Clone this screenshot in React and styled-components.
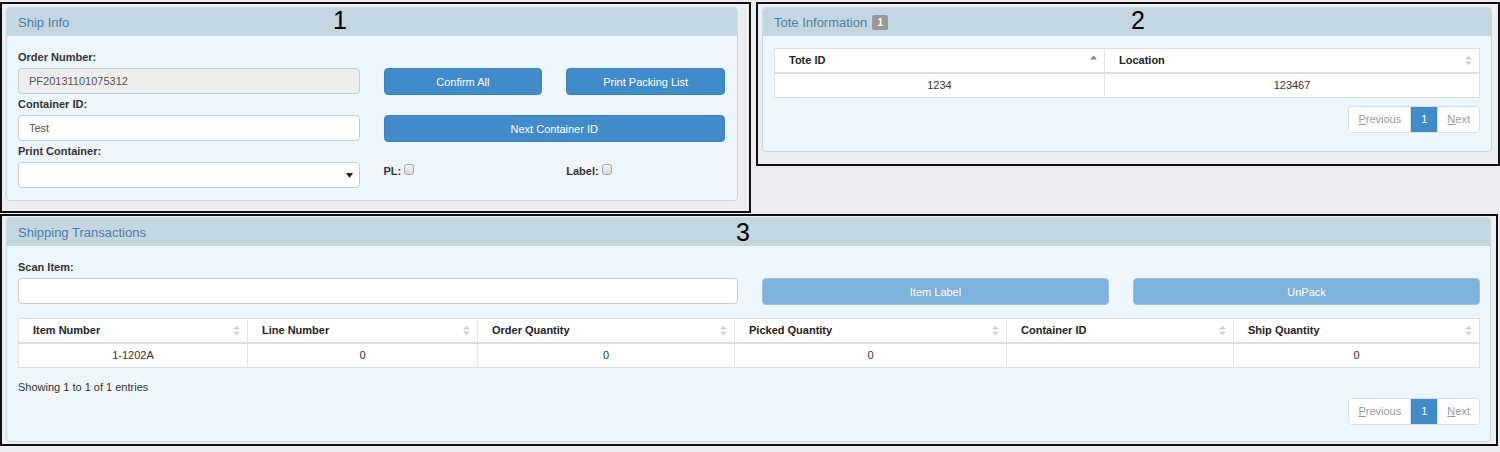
import styled, { createGlobalStyle } from "styled-components";

const GlobalStyle = createGlobalStyle`
  body {
    margin: 0;
    background: #eeedf2;
    font-family: "Liberation Sans", Arial, sans-serif;
    font-size: 11px;
    color: #333;
  }
`;

function SortIcon({ dir }) {
  return (
    <SortSvg width="7" height="11" viewBox="0 0 7 11">
      {dir !== "desc" && (
        <path d="M0 4.5 L3.5 0.5 L7 4.5 Z" fill={dir === "asc" ? "#7b7fd6" : "#d2d2d2"} />
      )}
      {!dir && <path d="M0 6.5 L3.5 10.5 L7 6.5 Z" fill="#d2d2d2" />}
    </SortSvg>
  );
}

function Pagination() {
  return (
    <Pager>
      <PageLink disabled>
        <u>P</u>revious
      </PageLink>
      <PageLink active>1</PageLink>
      <PageLink disabled>
        <u>N</u>ext
      </PageLink>
    </Pager>
  );
}

function DataTable({ columns, rows }) {
  return (
    <Table>
      <thead>
        <tr>
          {columns.map((c) => (
            <Th key={c.title} style={c.width ? { width: c.width } : undefined}>
              <ThInner>
                {c.title}
                <SortIcon dir={c.sort} />
              </ThInner>
            </Th>
          ))}
        </tr>
      </thead>
      <tbody>
        {rows.map((r, i) => (
          <tr key={i}>
            {r.map((v, j) => (
              <Td key={j}>{v}</Td>
            ))}
          </tr>
        ))}
      </tbody>
    </Table>
  );
}

const shipColumns = [
  { title: "Item Number", width: 229 },
  { title: "Line Number", width: 230 },
  { title: "Order Quantity", width: 257 },
  { title: "Picked Quantity", width: 272 },
  { title: "Container ID", width: 227 },
  { title: "Ship Quantity" },
];

export default function App() {
  return (
    <>
      <GlobalStyle />
      <Page>
        <TopRow>
          <Marker width="751px" pad="3px 11px 10px 4px">
            <Num left="331px">1</Num>
            <Panel>
              <PanelHeading>Ship Info</PanelHeading>
              <PanelBody pad="13px 12px 12px 11px">
                <TwoCol>
                  <Column>
                    <Label>Order Number:</Label>
                    <Input disabled value="PF20131101075312" readOnly />
                    <Label>Container ID:</Label>
                    <Input value="Test" readOnly />
                    <Label>Print Container:</Label>
                    <Select>
                      <svg width="7" height="5" viewBox="0 0 7 5">
                        <path d="M0 0 L7 0 L3.5 5 Z" fill="#222" />
                      </svg>
                    </Select>
                  </Column>
                  <Actions>
                    <Button>Confirm All</Button>
                    <Button>Print Packing List</Button>
                    <Button wide>Next Container ID</Button>
                    <CheckLabel>
                      PL: <Check type="checkbox" />
                    </CheckLabel>
                    <CheckLabel>
                      Label: <Check type="checkbox" />
                    </CheckLabel>
                  </Actions>
                </TwoCol>
              </PanelBody>
            </Panel>
          </Marker>
          <Marker width="744px" pad="3px 6px 12px 4px">
            <Num left="373px">2</Num>
            <Panel>
              <PanelHeading>
                Tote Information <Badge>1</Badge>
              </PanelHeading>
              <PanelBody pad="12px 11px 18px 11px">
                <DataTable
                  columns={[
                    { title: "Tote ID", width: 330, sort: "asc" },
                    { title: "Location" },
                  ]}
                  rows={[["1234", "123467"]]}
                />
                <PagerRow top="8px">
                  <Pagination />
                </PagerRow>
              </PanelBody>
            </Panel>
          </Marker>
        </TopRow>
        <Marker width="1498px" pad="1px 5px 2px 4px">
          <Num left="734px">3</Num>
          <Panel>
            <PanelHeading>Shipping Transactions</PanelHeading>
            <PanelBody pad="13px 10px 16px 11px">
              <ScanGrid>
                <Label>Scan Item:</Label>
                <span />
                <span />
                <Input value="" readOnly />
                <Button faded>Item Label</Button>
                <Button faded>UnPack</Button>
              </ScanGrid>
              <TableWrap>
                <DataTable
                  columns={shipColumns}
                  rows={[["1-1202A", "0", "0", "0", "", "0"]]}
                />
              </TableWrap>
              <Info>Showing 1 to 1 of 1 entries</Info>
              <PagerRow top="4px">
                <Pagination />
              </PagerRow>
            </PanelBody>
          </Panel>
        </Marker>
      </Page>
    </>
  );
}

const Page = styled.div`
  width: 1500px;
  padding-top: 2px;
`;

const TopRow = styled.div`
  display: flex;
  align-items: flex-start;
  gap: 5px;
  margin-bottom: 1px;
`;

const Marker = styled.div`
  position: relative;
  box-sizing: border-box;
  width: ${({ width }) => width};
  padding: ${({ pad }) => pad};
  border: 2px solid #111;
`;

const Num = styled.div`
  position: absolute;
  top: 2px;
  left: ${({ left }) => left};
  font-size: 25px;
  line-height: 28px;
  color: #000;
`;

const Panel = styled.div`
  border: 1px solid #c9d8e2;
  border-radius: 4px;
  background: #eef6fd;
  overflow: hidden;
`;

const PanelHeading = styled.div`
  display: flex;
  align-items: center;
  height: 28px;
  padding: 0 11px;
  background: #c4d6e0;
  color: #4a80a9;
  font-size: 13px;
`;

const Badge = styled.span`
  display: inline-flex;
  align-items: center;
  justify-content: center;
  width: 16px;
  height: 15px;
  margin-left: 5px;
  border-radius: 2px;
  background: #999;
  color: #fff;
  font-size: 10px;
  font-weight: bold;
`;

const PanelBody = styled.div`
  padding: ${({ pad }) => pad};
`;

const TwoCol = styled.div`
  display: grid;
  grid-template-columns: 1fr 1fr;
  column-gap: 24px;
`;

const Column = styled.div`
  display: flex;
  flex-direction: column;
`;

const Label = styled.label`
  display: block;
  font-weight: bold;
  font-size: 11px;
  line-height: 14px;
  margin: 3px 0 4px;
  color: #333;
  &:first-child {
    margin-top: 1px;
  }
`;

const Input = styled.input`
  box-sizing: border-box;
  width: 100%;
  height: 26px;
  padding: 0 10px;
  border: 1px solid #ccc;
  border-radius: 4px;
  background: ${({ disabled }) => (disabled ? "#eeeeee" : "#fff")};
  font-family: inherit;
  font-size: 11px;
  color: #555;
  outline: none;
`;

const Select = styled.div`
  box-sizing: border-box;
  display: flex;
  align-items: center;
  justify-content: flex-end;
  height: 26px;
  padding: 0 6px;
  border: 1px solid #ccc;
  border-radius: 4px;
  background: #fff;
`;

const Actions = styled.div`
  display: grid;
  grid-template-columns: 1fr 1fr;
  column-gap: 24px;
  row-gap: 20px;
  padding-top: 19px;
  align-content: start;
`;

const Button = styled.button`
  box-sizing: border-box;
  grid-column: ${({ wide }) => (wide ? "1 / 3" : "auto")};
  height: 27px;
  border: 1px solid ${({ faded }) => (faded ? "#9cc0e2" : "#3a83c3")};
  border-radius: 4px;
  background: ${({ faded }) => (faded ? "#7fb1dd" : "#428bca")};
  color: #fff;
  font-family: inherit;
  font-size: 11px;
  padding: 0;
  cursor: pointer;
`;

const CheckLabel = styled.label`
  display: flex;
  align-items: flex-start;
  gap: 3px;
  margin-top: 2px;
  font-weight: bold;
  font-size: 11px;
  line-height: 14px;
  color: #333;
`;

const Check = styled.input`
  appearance: none;
  box-sizing: border-box;
  width: 10px;
  height: 11px;
  margin: 0;
  border: 1px solid #aaa;
  border-radius: 3px;
  background: linear-gradient(#f3f3f3, #d8d8d8);
`;

const ScanGrid = styled.div`
  display: grid;
  grid-template-columns: 1fr 347px 347px;
  column-gap: 24px;
`;

const TableWrap = styled.div`
  margin-top: 13px;
`;

const Table = styled.table`
  width: 100%;
  table-layout: fixed;
  border-collapse: collapse;
  background: #fff;
  border: 1px solid #dddddd;
  font-size: 11px;
`;

const Th = styled.th`
  box-sizing: border-box;
  height: 24px;
  padding: 0 7px 0 14px;
  text-align: left;
  font-weight: bold;
  color: #222;
  border-left: 1px solid #e4e4e4;
  border-bottom: 2px solid #dddddd;
`;

const ThInner = styled.div`
  display: flex;
  align-items: center;
  justify-content: space-between;
`;

const SortSvg = styled.svg`
  flex: none;
`;

const Td = styled.td`
  height: 23px;
  padding: 0 8px;
  text-align: center;
  color: #333;
  border-left: 1px solid #e4e4e4;
  border-top: 1px solid #dddddd;
`;

const Info = styled.div`
  margin-top: 12px;
  line-height: 14px;
  color: #333;
`;

const PagerRow = styled.div`
  display: flex;
  justify-content: flex-end;
  margin-top: ${({ top }) => top};
`;

const Pager = styled.div`
  display: flex;
  border: 1px solid #dddddd;
  border-radius: 4px;
  overflow: hidden;
  background: #fff;
`;

const PageLink = styled.span`
  display: flex;
  align-items: center;
  height: 25px;
  padding: 0 ${({ active }) => (active ? "10px" : "9px")};
  background: ${({ active }) => (active ? "#428bca" : "#fff")};
  color: ${({ active }) => (active ? "#fff" : "#999")};
  font-size: 11px;
  & + & {
    border-left: 1px solid #dddddd;
  }
`;
